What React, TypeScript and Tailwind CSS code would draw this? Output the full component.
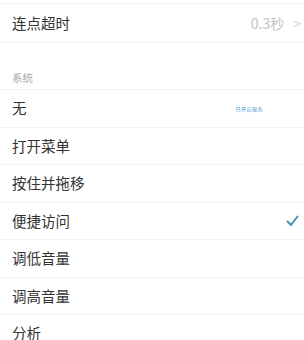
const systemItems = ["无", "打开菜单", "按住并拖移", "便捷访问", "调低音量", "调高音量", "分析"];

function Check() {
  return (
    <svg width="13" height="12" viewBox="0 0 13 12" fill="none">
      <path d="M1.5 6.5 L5 10 L11.5 1.5" stroke="#3f8db5" strokeWidth="1.8" strokeLinecap="round" strokeLinejoin="round" />
    </svg>
  );
}

export default function App() {
  return (
    <div
      className="w-[304px] h-[340px] overflow-hidden bg-white text-[#333333]"
      style={{ fontFamily: '"Noto Sans CJK SC", "Noto Sans", sans-serif' }}
    >
      <div className="h-[3px]" />
      <div className="border-t border-b border-[#f3f3f3] h-[40px] flex items-center pl-3 pr-[3px]">
        <span className="text-[14.5px] flex-1">连点超时</span>
        <span className="text-[14px] text-[#c2c2c2]">0.3秒</span>
        <span className="ml-[9px] text-[14px] text-[#d3d3d3]">&gt;</span>
      </div>
      <div className="h-[46px] flex items-end pl-3 pb-[3px]">
        <span className="text-[10.5px] text-[#a8a8a8]">系统</span>
      </div>
      <div className="border-t border-[#f3f3f3]">
        {systemItems.map((item, i) => (
          <div
            key={item}
            className="h-[37.5px] flex items-center pl-3 pr-[5px] border-b border-[#f4f4f4]"
          >
            <span className="text-[14.5px] flex-1">{item}</span>
            {i === 0 && (
              <span className="text-[5px] text-[#4a97c7] mr-[36px] tracking-[0.5px]">已开启服务</span>
            )}
            {i === 3 && <Check />}
          </div>
        ))}
      </div>
    </div>
  );
}
